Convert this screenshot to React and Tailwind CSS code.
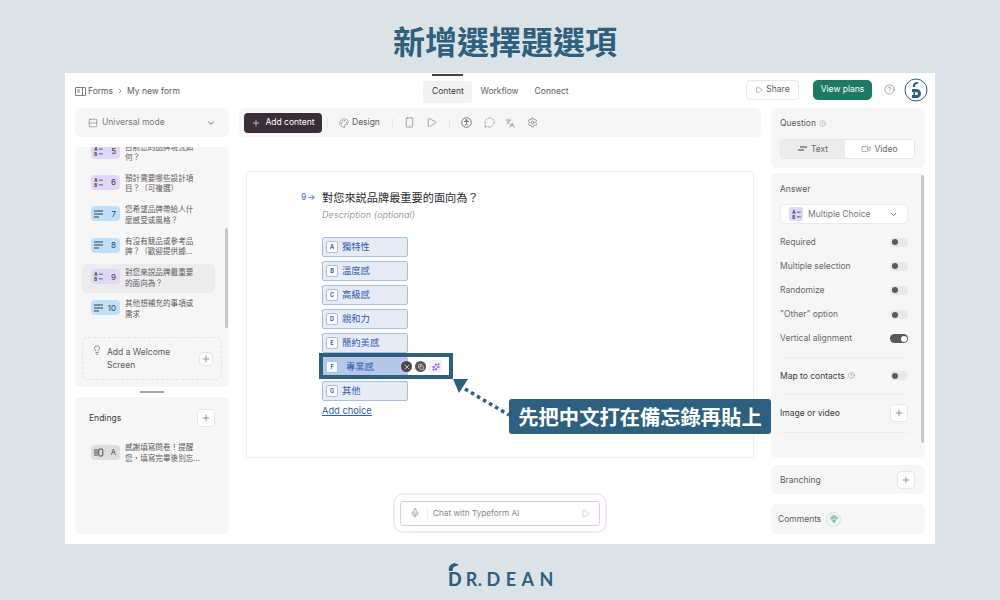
import React from "react";
import { ChevronRight, ChevronDown, Plus, Play, CircleHelp, Palette, Smartphone, Languages, Settings, MessageCircleDashed, Video, Mic, Lightbulb, Gem, X, Copy, Sparkles, Rows2 } from "lucide-react";

const cjk = "font-['Inter','Noto_Sans_CJK_TC',sans-serif]";

function McIcon({ c = "#3d3a40", s = 14 }) {
  return (
    <svg width={s} height={s} viewBox="0 0 14 14" fill="none">
      <text x="1.5" y="6" fontSize="5.5" fontWeight="700" fill={c} fontFamily="Inter">A</text>
      <text x="1.5" y="12.2" fontSize="5.5" fontWeight="700" fill={c} fontFamily="Inter">B</text>
      <path d="M7.5 4h5M7.5 10h5" stroke={c} strokeWidth="1" />
    </svg>
  );
}
function TextIcon({ c = "#3d3a40" }) {
  return (
    <svg width="11" height="10" viewBox="0 0 11 10" fill="none">
      <path d="M1 2h9M1 5h9M1 8h5" stroke={c} strokeWidth="1.1" />
    </svg>
  );
}
function Item({ kind, n, text, active }) {
  const bg = kind === "mc" ? "bg-[#e0d8f8]" : "bg-[#bfe0fb]";
  return (
    <div className={`w-[133px] flex items-center h-[29px] mb-[2.4px] pl-[9px] rounded-[5px] ${active ? "bg-[#ececec]" : ""}`}>
      <div className={`w-[29px] h-[15px] rounded-[4px] ${bg} flex items-center justify-between pl-[2px] pr-[4px] text-[#3d3a40] shrink-0 -mt-[4px] text-[8px]`}>
        {kind === "mc" ? <McIcon s={11} /> : <TextIcon />}
        <span>{n}</span>
      </div>
      <div className="ml-[5px] w-[72px] text-[7.6px] leading-[10.5px] text-[#5e5a5f]">{text}</div>
    </div>
  );
}
function Opt({ l, t }) {
  return (
    <div className="w-[86px] h-[20px] rounded-[2px] bg-[#e7ebf6] border border-[#a9bfe6] flex items-center pl-[3px] gap-[4px] text-[#2f5cb0]">
      <span className="w-[12px] h-[12px] bg-white border border-[#a9bfe6] rounded-[2px] text-[5.5px] font-bold flex items-center justify-center">{l}</span>
      <span className="text-[9.3px]">{t}</span>
    </div>
  );
}
function Sw({ on }) {
  return on ? (
    <span className="w-[18px] h-[9px] rounded-full bg-[#5c5660] flex items-center justify-end pr-[1.5px]">
      <span className="w-[6px] h-[6px] rounded-full bg-white" />
    </span>
  ) : (
    <span className="w-[18px] h-[9px] rounded-full bg-[#e8e8e8] flex items-center pl-[1.5px]">
      <span className="w-[6px] h-[6px] rounded-full bg-[#5c5660]" />
    </span>
  );
}
function Row({ label, on }) {
  return (
    <div className="h-[24.2px] flex items-center justify-between text-[8.5px] text-[#6b676d]">
      <span>{label}</span>
      <Sw on={on} />
    </div>
  );
}
function PlusBtn({ s = "w-[18px] h-[18px]" }) {
  return (
    <span className={`${s} bg-white border border-[#e6e6e6] rounded-[4px] flex items-center justify-center text-[#5e5a5f]`}>
      <Plus size={10} strokeWidth={1.5} />
    </span>
  );
}
const Sep = () => <span className="block w-px h-[10px] bg-[#e8e8e8]" />;

export default function App() {
  return (
    <div className={`relative w-[1000px] h-[600px] overflow-hidden bg-[#dce3e6] ${cjk}`}>
      <div className="h-[73px] flex items-center justify-center pl-[10px] pt-[7px]">
        <h1 className="text-[32px] leading-none font-bold text-[#2d5f7e] font-['Noto_Sans_CJK_TC',sans-serif]">新增選擇題選項</h1>
      </div>

      <div className="w-[870px] h-[471px] mx-auto bg-white flex flex-col">
        {/* header */}
        <div className="h-[35px] grid grid-cols-3 items-center px-[10px] text-[8.5px] text-[#5e5a5f]">
          <div className="flex items-center pt-[1px]">
            <svg width="11" height="9" viewBox="0 0 11 9" fill="none" stroke="#5e5a5f" strokeWidth="0.8">
              <rect x="0.5" y="0.5" width="10" height="8" rx="0.5" />
              <path d="M7.5 1v7M2 3h3M2 5h3" />
            </svg>
            <span className="ml-[2px]">Forms</span>
            <ChevronRight size={8} className="mx-[3px]" />
            <span>My new form</span>
          </div>
          <div className="flex items-center justify-center gap-[8px] h-full pt-[1px] pr-[8px]">
            <span className="relative w-[49px] h-[22px] mt-[1px] bg-[#f3f3f3] rounded-[3px] flex items-center justify-center text-[#3d3a40]">
              Content
              <span className="absolute -top-[7px] left-[9px] w-[31px] h-[2px] bg-[#4a3f4a]" />
            </span>
            <span className="mr-[8px]">Workflow</span>
            <span>Connect</span>
          </div>
          <div className="flex items-center justify-end -mr-[3px] -mt-[2px]">
            <span className="w-[53px] h-[20px] border border-[#e8e8e8] rounded-[4px] flex items-center justify-center gap-[3px]">
              <Play size={8} strokeWidth={1.3} />Share
            </span>
            <span className="w-[59px] h-[20px] ml-[14px] rounded-[5px] bg-[#1c7a63] text-white flex items-center justify-center">View plans</span>
            <span className="flex items-center ml-[12px]"><CircleHelp size={11} strokeWidth={1.2} /></span>
            <svg width="24" height="24" viewBox="0 0 24 24" fill="none" className="ml-[9px]">
              <circle cx="12" cy="12" r="11" fill="#fff" stroke="#2d5f7e" strokeWidth="1" />
              <path d="M8 11h4.5a4.5 4.5 0 0 1 0 9H8v-3h1.5v-3H8z M11 14v3h1.5a1.5 1.5 0 0 0 0-3z" fill="#2d5f7e" fillRule="evenodd" />
              <path d="M9 9c-.8-3 1.5-5 4.5-5l1 1.5-1.5.5c-1.5 0-2 1-2 3z" fill="#2d5f7e" />
            </svg>
          </div>
        </div>

        {/* main */}
        <div className="flex gap-[10px] px-[10px]">
          {/* left */}
          <div className="w-[154px] flex flex-col">
            <div className="h-[29px] rounded-[6px] bg-[#f6f6f6] flex items-center pl-[13px] pr-[13px] text-[8.5px] text-[#7a767c]">
              <Rows2 size={10} strokeWidth={1.2} className="text-[#5e5a5f]" />
              <span className="ml-[4px]">Universal mode</span>
              <ChevronDown size={10} className="ml-auto text-[#5e5a5f]" />
            </div>
            <div className="relative mt-[10px] h-[240px] rounded-[6px] bg-[#f6f6f6] flex flex-col overflow-hidden">
              <div className="h-[184px] overflow-hidden px-[7px] shrink-0">
                <div className="-mt-[8.5px]">
                  <Item kind="mc" n="5" text="目前您的品牌現況如何？" />
                  <Item kind="mc" n="6" text="預計需要哪些設計項目？（可複選）" />
                  <Item kind="text" n="7" text="您希望品牌帶給人什麼感受或風格？" />
                  <Item kind="text" n="8" text="有沒有競品或參考品牌？（歡迎提供據..." />
                  <Item kind="mc" n="9" text="對您來説品牌最重要的面向為？" active />
                  <Item kind="text" n="10" text="其他想補充的事項或需求" />
                </div>
              </div>
              <span className="absolute left-[150px] top-[81px] w-[3px] h-[100px] rounded-full bg-[#c9c6c9]" />
              <div className="mx-[7px] mt-[6px] h-[43px] border border-dashed border-[#e3e3e3] rounded-[6px] flex items-center pl-[9px] pr-[8px]">
                <Lightbulb size={10} strokeWidth={1.3} className="self-start mt-[7px] text-[#3d3a40]" />
                <span className="ml-[5px] w-[70px] text-[8.5px] leading-[12.5px] text-[#5e5a5f]">Add a Welcome Screen</span>
                <span className="ml-auto"><PlusBtn s="w-[14px] h-[14px]" /></span>
              </div>
            </div>
            <div className="h-[10px] flex items-center justify-center">
              <span className="w-[24px] h-[2px] bg-[#a8a4a8]" />
            </div>
            <div className="h-[137px] rounded-[6px] bg-[#f6f6f6] px-[14px] pt-[12px]">
              <div className="flex items-center justify-between text-[8.5px] text-[#3d3a40]">
                <span>Endings</span>
                <PlusBtn />
              </div>
              <div className="flex mt-[16px] ml-[2px]">
                <div className="w-[29px] h-[15px] mt-[2px] rounded-[4px] bg-[#dedede] flex items-center justify-between px-[3px] text-[7.5px] text-[#3d3a40] shrink-0">
                  <svg width="10" height="9" viewBox="0 0 10 9" fill="none" stroke="#3d3a40" strokeWidth="0.9"><path d="M1 1v7M3 1v7" /><rect x="4.8" y="1" width="4" height="7" rx="1" /></svg>
                  <span className="mr-[1px]">A</span>
                </div>
                <div className="ml-[5px] w-[76px] text-[7.6px] leading-[10.5px] text-[#5e5a5f]">感謝填寫問卷！提醒您，填寫完畢後別忘...</div>
              </div>
            </div>
          </div>

          {/* center */}
          <div className="w-[522px] flex flex-col">
            <div className="h-[29px] rounded-[6px] bg-[#f6f6f6] flex items-center pl-[5px] text-[8.5px] text-[#5e5a5f]">
              <span className="w-[78px] h-[20px] rounded-[4px] bg-[#3a2d38] text-white flex items-center justify-center gap-[4px]">
                <Plus size={10} strokeWidth={1.5} />Add content
              </span>
              <span className="ml-[5px]"><Sep /></span>
              <span className="ml-[11px] flex items-center gap-[3px]"><Palette size={10} strokeWidth={1.2} />Design</span>
              <span className="ml-[12px]"><Sep /></span>
              <Smartphone size={11} strokeWidth={1.2} className="ml-[11px]" />
              <Play size={11} strokeWidth={1.2} className="ml-[11px]" />
              <span className="ml-[12px]"><Sep /></span>
              <svg width="11" height="11" viewBox="0 0 11 11" fill="none" stroke="#5e5a5f" strokeWidth="0.8" className="ml-[11px]">
                <circle cx="5.5" cy="5.5" r="4.8" />
                <circle cx="5.5" cy="3.2" r="0.6" fill="#5e5a5f" />
                <path d="M3 4.5h5M5.5 4.5v2M5.5 6.5L4 8.5M5.5 6.5L7 8.5" />
              </svg>
              <MessageCircleDashed size={11} strokeWidth={1.2} className="ml-[12px]" />
              <Languages size={10} strokeWidth={1.2} className="ml-[10px]" />
              <Settings size={11} strokeWidth={1.2} className="ml-[12px]" />
            </div>

            <div className="mt-[34px] mx-[7px] h-[287px] border border-[#efefef] rounded-[2px] pl-[75px] pt-[16px]">
              <div className="relative h-[18px] flex items-center text-[11.2px] text-[#2f2b30] font-['Noto_Sans_CJK_TC',sans-serif]">
                <span className="absolute -left-[21px] flex items-center text-[8.5px] text-[#3a6fd0] font-['Inter']">9<span className="ml-[1px]">→</span></span>
                對您來説品牌最重要的面向為？
              </div>
              <div className="mt-[2px] text-[9.1px] italic text-[#a09da1] leading-[14px]">Description (optional)</div>
              <div className="mt-[15px] flex flex-col gap-[4px]">
                <Opt l="A" t="獨特性" />
                <Opt l="B" t="溫度感" />
                <Opt l="C" t="高級感" />
                <Opt l="D" t="親和力" />
                <Opt l="E" t="簡約美感" />
                <div className="relative w-[86px] h-[20px] rounded-[2px] bg-[#b6c7e8] flex items-center pl-[4px] text-[#2f5cb0]">
                  <span className="w-[12px] h-[12px] bg-white border border-[#a9bfe6] rounded-[2px] text-[5.5px] font-bold flex items-center justify-center">F</span>
                  <span className="ml-[8px] text-[9.3px]">專業感</span>
                  <span className="absolute -left-[3px] -top-[4px] w-[134px] h-[26px] border-[4px] border-[#2d5f7e]" />
                  <span className="absolute left-[79px] top-[4px] w-[11px] h-[11px] rounded-full bg-[#4a464b] text-white flex items-center justify-center"><X size={8} strokeWidth={2} /></span>
                  <span className="absolute left-[93px] top-[4px] w-[11px] h-[11px] rounded-full bg-[#5a565b] text-white flex items-center justify-center"><Copy size={6} strokeWidth={2} /></span>
                  <span className="absolute left-[107px] top-[3px] w-[13px] h-[13px] rounded-[3px] bg-[#f5f0fd] text-[#6a3fd0] flex items-center justify-center"><Sparkles size={8} strokeWidth={2} /></span>
                </div>
                <Opt l="G" t="其他" />
              </div>
              <div className="mt-[3px] text-[9.3px] text-[#2f5cb0] underline">Add choice</div>
            </div>

            <div className="mt-[35px] mx-auto w-[214px] h-[40px] rounded-[10px] border-2 border-[#f3e8f8] flex items-center justify-center">
              <div className="w-[200px] h-[25px] rounded-[3px] border border-[#dfcaea] flex items-center px-[9px] text-[8.2px] text-[#8a878b]">
                <Mic size={10} strokeWidth={1.2} className="text-[#5e5a5f]" />
                <span className="ml-[7px] w-px h-[13px] bg-[#efefef]" />
                <span className="ml-[5px]">Chat with Typeform AI</span>
                <Play size={9} strokeWidth={1} className="ml-auto" />
              </div>
            </div>
          </div>

          {/* right */}
          <div className="w-[154px] flex flex-col">
            <div className="h-[60px] rounded-[6px] bg-[#f6f6f6] pl-[9px] pt-[9px] pr-[10px]">
              <div className="flex items-center gap-[3px] text-[8.5px] text-[#5e5a5f] h-[13px]">
                Question <CircleHelp size={7} strokeWidth={1} />
              </div>
              <div className="mt-[9px] h-[20px] rounded-[4px] border border-[#e6e6e6] flex text-[8.5px] text-[#6b676d] overflow-hidden">
                <span className="w-[64px] bg-[#ececec] flex items-center justify-center gap-[4px]"><svg width="9" height="6" viewBox="0 0 9 6"><path d="M2 1h7M0 4h6" stroke="#3d3a40" strokeWidth="1" /></svg>Text</span>
                <span className="flex-1 bg-white flex items-center justify-center gap-[3px]"><Video size={10} strokeWidth={1.2} />Video</span>
              </div>
            </div>
            <div className="relative mt-[5px] h-[285px] rounded-[6px] bg-[#f6f6f6] pl-[9px] pr-[17px] pt-[10px]">
              <span className="absolute left-[150px] top-[2px] w-[3px] h-[268px] rounded-full bg-[#c9c6c9]" />
              <div className="text-[8.5px] text-[#5e5a5f] h-[12px] leading-[12px]">Answer</div>
              <div className="mt-[9px] h-[20px] bg-white border border-[#ebebeb] rounded-[5px] flex items-center pl-[8px] pr-[9px] text-[8.5px] text-[#7a767c]">
                <span className="w-[14px] h-[14px] rounded-[3px] bg-[#e0d8f8] flex items-center justify-center"><McIcon s={11} /></span>
                <span className="ml-[5px]">Multiple Choice</span>
                <ChevronDown size={9} className="ml-auto text-[#3d3a40]" />
              </div>
              <div className="mt-[6px]">
                <Row label="Required" />
                <Row label="Multiple selection" />
                <Row label="Randomize" />
                <Row label={'"Other" option'} />
                <Row label="Vertical alignment" on />
              </div>
              <div className="mt-[6px] border-t border-[#ededed] h-[37px] flex items-center justify-between text-[8.5px] text-[#3d3a40]">
                <span className="flex items-center gap-[3px]">Map to contacts <CircleHelp size={7} strokeWidth={1} /></span>
                <Sw />
              </div>
              <div className="border-t border-b border-[#ededed] h-[39px] flex items-center justify-between text-[8.5px] text-[#3d3a40]">
                <span>Image or video</span>
                <PlusBtn />
              </div>
            </div>
            <div className="mt-[7px] h-[29px] rounded-[6px] bg-[#f6f6f6] pl-[9px] pr-[10px] flex items-center justify-between text-[8.5px] text-[#5e5a5f]">
              <span className="pt-[1px]">Branching</span> <PlusBtn />
            </div>
            <div className="mt-[10px] h-[30px] rounded-[6px] bg-[#f6f6f6] pl-[7px] flex items-center gap-[5px] text-[8.5px] text-[#5e5a5f]">
              Comments
              <span className="w-[15px] h-[15px] rounded-full bg-[#eef8f4] border border-[#cfe8df] flex items-center justify-center text-[#1c7a63]"><Gem size={8} strokeWidth={1.3} /></span>
            </div>
          </div>
        </div>
      </div>

      <div className="h-[56px] flex items-start justify-center pt-[24px]">
        <div className="relative flex items-baseline text-[#2d5f7e] text-[18px] leading-[22px] font-black font-['Lato',sans-serif] w-[104px]">
          <svg width="12" height="10" viewBox="0 0 13 11" className="absolute -top-[6px] left-0">
            <path d="M1 10c-1-4 1-8 6-9l5 2-4 2c-2 0-3 2-3 5z" fill="#2d5f7e" />
          </svg>
          <span className="tracking-[4px]">D</span>
          <span className="font-bold tracking-[0.5px]">R.</span>
          <span className="ml-[4px] font-bold tracking-[5.5px]">DEAN</span>
        </div>
      </div>

      {/* annotation */}
      <svg width="70" height="50" viewBox="0 0 70 50" fill="none" className="absolute left-[450px] top-[376px]">
        <path d="M3 3h15l-9 14z" fill="#2d5f7e" />
        <path d="M15 13L59 39" stroke="#2d5f7e" strokeWidth="3.5" strokeDasharray="3.5 3.5" />
      </svg>
      <div className="absolute left-[509px] top-[399px] w-[262px] h-[35px] rounded-[3px] bg-[#2d5f7e] text-white text-[20.3px] font-bold flex items-center justify-center font-['Noto_Sans_CJK_TC',sans-serif]">
        先把中文打在備忘錄再貼上
      </div>
    </div>
  );
}
